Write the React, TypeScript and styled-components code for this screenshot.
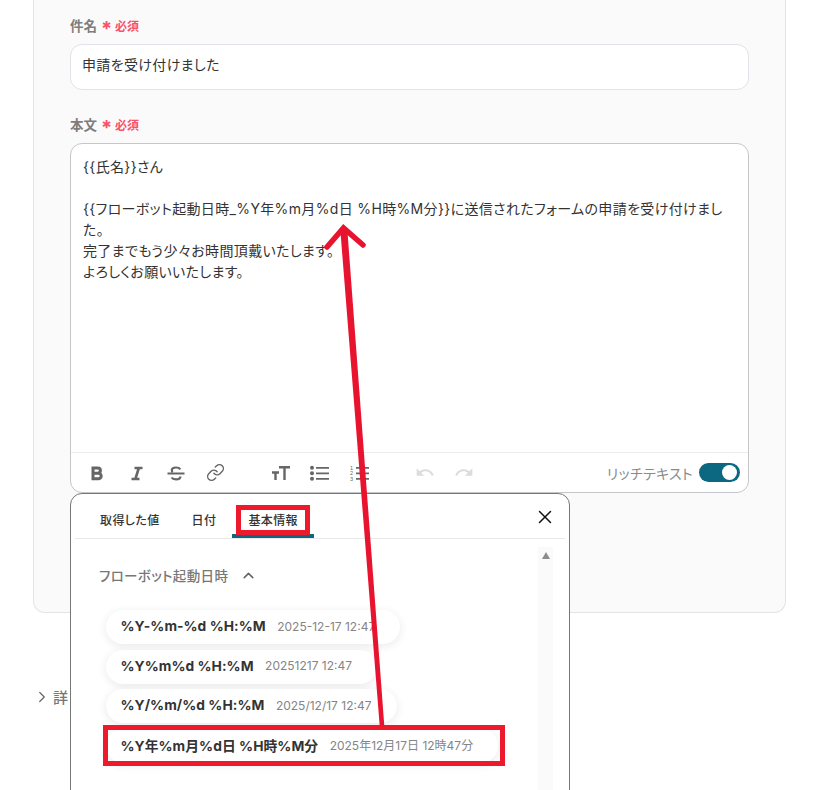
import { FC, ReactNode } from 'react'
import { ChevronRight, ChevronUp, Link, X } from 'lucide-react'
import { MdRedo, MdUndo } from 'react-icons/md'
import styled, { createGlobalStyle } from 'styled-components'

const GlobalStyle = createGlobalStyle`
  html, body {
    margin: 0;
    padding: 0;
    background: #fff;
  }
  body {
    font-family: Inter, "Noto Sans CJK JP", "Noto Sans", sans-serif;
    font-feature-settings: "palt";
    color: #333;
  }
  * {
    box-sizing: border-box;
  }
`

const bodyLines = [
  '{{氏名}}さん',
  '',
  '{{フローボット起動日時_%Y年%m月%d日 %H時%M分}}に送信されたフォームの申請を受け付けました。',
  '完了までもう少々お時間頂戴いたします。',
  'よろしくお願いいたします。',
]

const chips = [
  { format: '%Y-%m-%d %H:%M', sample: '2025-12-17 12:47' },
  { format: '%Y%m%d %H:%M', sample: '20251217 12:47' },
  { format: '%Y/%m/%d %H:%M', sample: '2025/12/17 12:47' },
  { format: '%Y年%m月%d日 %H時%M分', sample: '2025年12月17日 12時47分' },
]

const FieldLabel: FC<{ children: ReactNode }> = ({ children }) => (
  <Label>
    {children}
    <Asterisk>*</Asterisk>
    <Required>必須</Required>
  </Label>
)

const Toolbar = () => (
  <ToolbarRow>
    <IconGroup>
      <IconButton>
        <svg width="20" height="20" viewBox="0 0 20 20" fill="none" stroke="#666" strokeWidth="3">
          <path d="M6 5h4.800a2.600 2.600 0 0 1 0 5.200H6M6 10.200h5.400a2.800 2.800 0 0 1 0 5.600H6M6 3.500v13.800" />
        </svg>
      </IconButton>
      <IconButton>
        <svg width="20" height="20" viewBox="0 0 20 20" fill="none" stroke="#666" strokeWidth="2.600">
          <path d="M7.500 5h8M4.500 16h8M11.800 5l-3.400 11" />
        </svg>
      </IconButton>
      <IconButton>
        <svg width="20" height="20" viewBox="0 0 20 20" fill="none" stroke="#666" strokeWidth="2.200">
          <path d="M1.500 10.500h17M14.300 6.400c-.8-1.300-2.200-1.900-4.300-1.900-2.600 0-4.200 1.100-4.200 2.700 0 .8.300 1.400.9 1.900M5.600 14.500c.8 1.300 2.300 1.900 4.400 1.900 2.600 0 4.400-1.100 4.400-2.900" />
        </svg>
      </IconButton>
      <IconButton>
        <Link size={19} color="#666" strokeWidth={1.8} />
      </IconButton>
    </IconGroup>
    <IconGroup>
      <IconButton>
        <svg width="20" height="20" viewBox="0 0 20 20" fill="none" stroke="#666" strokeWidth="2.400">
          <path d="M8 4.200h11M13.500 4.200v12.800M1 9.500h7M4.500 9.500v7.500" />
        </svg>
      </IconButton>
      <IconButton>
        <svg width="20" height="20" viewBox="0 0 20 20" fill="none" stroke="#666" strokeWidth="1.800">
          <path d="M6 4.800h13M6 10.300h13M6 15.800h13" />
          <g fill="#666" stroke="none">
            <circle cx="2" cy="4.800" r="2" />
            <circle cx="2" cy="10.300" r="2" />
            <circle cx="2" cy="15.800" r="2" />
          </g>
        </svg>
      </IconButton>
      <IconButton>
        <svg width="20" height="20" viewBox="0 0 20 20" fill="none" stroke="#666" strokeWidth="1.800">
          <path d="M6 4.800h13M6 10.300h13M6 15.800h13" />
          <g fill="#666" stroke="none" fontSize="5.500" fontFamily="Liberation Sans, sans-serif">
            <text x="0" y="6.800">1</text>
            <text x="0" y="12.300">2</text>
            <text x="0" y="17.800">3</text>
          </g>
        </svg>
      </IconButton>
    </IconGroup>
    <IconGroup>
      <IconButton>
        <MdUndo size={25} color="#dcdcdc" />
      </IconButton>
      <IconButton>
        <MdRedo size={25} color="#dcdcdc" />
      </IconButton>
    </IconGroup>
    <RichText>
      <RichLabel>リッチテキスト</RichLabel>
      <ToggleTrack>
        <ToggleKnob />
      </ToggleTrack>
    </RichText>
  </ToolbarRow>
)

const VariablePopup = () => (
  <Popup>
    <TabRow>
      <Tab>取得した値</Tab>
      <Tab>日付</Tab>
      <Tab $active>基本情報</Tab>
      <CloseButton>
        <X size={22} color="#111" strokeWidth={1.6} />
      </CloseButton>
    </TabRow>
    <PopupBody>
      <PopupContent>
        <SectionTitle>
          フローボット起動日時
          <ChevronUp size={17} color="#666" strokeWidth={2.200} />
        </SectionTitle>
        <ChipList>
          {chips.map((chip) => (
            <Chip key={chip.format}>
              <ChipFormat>{chip.format}</ChipFormat>
              <ChipSample>{chip.sample}</ChipSample>
            </Chip>
          ))}
        </ChipList>
      </PopupContent>
      <ScrollTrack>
        <ScrollArrow />
      </ScrollTrack>
    </PopupBody>
  </Popup>
)

// 赤い注釈（枠と矢印）はスクリーンショットの上に重ねる
const Annotations = () => (
  <AnnotationLayer width="832" height="790" viewBox="0 0 832 790" fill="none" stroke="#ed1a2e" strokeWidth="5">
    <rect x="238.500" y="507.500" width="69" height="25" />
    <rect x="105.500" y="727.500" width="397" height="36" />
    <polygon points="340.500,232 347.500,232 384.300,726 379.700,726" fill="#e8142f" stroke="none" />
    <path d="M327 247L343.500 228L363 245" stroke="#e8142f" strokeWidth="5.500" strokeLinecap="round" />
  </AnnotationLayer>
)

export default function App() {
  return (
    <Page>
      <GlobalStyle />
      <Card>
        <FieldLabel>件名</FieldLabel>
        <SubjectInput>申請を受け付けました</SubjectInput>
        <BodyLabelWrap>
          <FieldLabel>本文</FieldLabel>
        </BodyLabelWrap>
        <Editor>
          <EditorText>
            {bodyLines.map((line, i) => (
              <EditorLine key={i}>{line || '\u00a0'}</EditorLine>
            ))}
          </EditorText>
          <Toolbar />
        </Editor>
      </Card>
      <DetailRow>
        <ChevronRight size={18} color="#666" strokeWidth={1.6} />詳
      </DetailRow>
      <VariablePopup />
      <Annotations />
    </Page>
  )
}

const Page = styled.div`
  position: relative;
  width: 832px;
  height: 790px;
  overflow: hidden;
  padding: 0 46px 0 33px;
`

const Card = styled.section`
  height: 613px;
  padding: 16px 36px 0 36px;
  background: #fafafa;
  border: 1px solid #e4e4e4;
  border-top: 0;
  border-radius: 0 0 12px 12px;
`

const Label = styled.div`
  display: flex;
  align-items: center;
  height: 18px;
  font-size: 13.500px;
  font-weight: 700;
  color: #7d7d7d;
`

const Asterisk = styled.span`
  margin-left: 4px;
  width: 10px;
  font-size: 20px;
  line-height: 18px;
  padding-top: 8px;
  color: #f8516a;
`

const Required = styled.span`
  margin-left: 4px;
  font-size: 12px;
  color: #f8516a;
`

const SubjectInput = styled.div`
  display: flex;
  align-items: center;
  height: 46px;
  margin-top: 10px;
  padding: 0 11px 7px;
  font-size: 14px;
  letter-spacing: 0.35px;
  background: #fff;
  border: 1px solid #e2e2e8;
  border-radius: 12px;
`

const BodyLabelWrap = styled.div`
  margin-top: 25px;
  margin-bottom: 10px;
`

const Editor = styled.div`
  height: 350px;
  display: flex;
  flex-direction: column;
  background: #fff;
  border: 1px solid #c6c6c6;
  border-radius: 12px;
`

const EditorText = styled.div`
  flex: 1;
  padding: 12px 12px 0;
  font-size: 14px;
  line-height: 21px;
  letter-spacing: 0.35px;
  color: #333;
`

const EditorLine = styled.div``

const ToolbarRow = styled.div`
  display: flex;
  align-items: center;
  gap: 45px;
  height: 40px;
  padding: 0 8px 0 16px;
  border-top: 1px solid #ececec;
`

const IconGroup = styled.div`
  display: flex;
  align-items: center;
  gap: 19.500px;
`

const IconButton = styled.span`
  display: flex;
  align-items: center;
  justify-content: center;
  width: 20px;
  height: 20px;
  flex: none;
`

const RichText = styled.div`
  display: flex;
  align-items: center;
  gap: 6px;
  margin-left: auto;
`

const RichLabel = styled.span`
  font-size: 14px;
  letter-spacing: 0.3px;
  color: #8a8a8a;
`

const ToggleTrack = styled.span`
  display: flex;
  align-items: center;
  justify-content: flex-end;
  width: 41px;
  height: 19px;
  padding-right: 3px;
  background: #0c6780;
  border-radius: 10px;
`

const ToggleKnob = styled.span`
  width: 15px;
  height: 15px;
  background: #fff;
  border-radius: 50%;
`

const Popup = styled.div`
  position: absolute;
  left: 70px;
  top: 493px;
  width: 500px;
  height: 330px;
  background: #fff;
  border: 1px solid #777;
  border-radius: 12px 12px 0 0;
`

const TabRow = styled.div`
  display: flex;
  align-items: stretch;
  height: 45px;
  margin: 0 4px;
  padding-left: 9px;
  border-bottom: 1px solid #e8e8e8;
`

const Tab = styled.div<{ $active?: boolean }>`
  display: flex;
  align-items: center;
  padding: 10px 16px 0;
  font-size: 12px;
  font-weight: 500;
  letter-spacing: 0.4px;
  color: #333;
  border-bottom: 4px solid ${(p) => (p.$active ? '#0c6780' : 'transparent')};
  border-radius: 4px 4px 0 0;
`

const CloseButton = styled.span`
  display: flex;
  align-items: center;
  margin-left: auto;
  padding: 6px 9px 0 0;
  margin-bottom: 4px;
`

const PopupBody = styled.div`
  display: flex;
  padding: 8px 16px 0 28px;
`

const PopupContent = styled.div`
  flex: 1;
`

const SectionTitle = styled.div`
  display: flex;
  align-items: center;
  gap: 12px;
  height: 20px;
  margin-top: 18px;
  font-size: 13.500px;
  font-weight: 500;
  letter-spacing: 0.35px;
  color: #777;
`

const ChipList = styled.div`
  display: flex;
  flex-direction: column;
  align-items: flex-start;
  gap: 5.500px;
  margin: 25px 0 0 7px;
`

const Chip = styled.div`
  display: inline-flex;
  align-items: center;
  gap: 11.500px;
  height: 34px;
  padding: 0 25px 2px 14.500px;
  background: #fff;
  border-radius: 17px;
  box-shadow: 0 2px 10px rgba(0, 0, 0, 0.09);
`

const ChipFormat = styled.span`
  font-size: 13.800px;
  font-weight: 700;
  letter-spacing: 0.05px;
  color: #333;
`

const ChipSample = styled.span`
  font-size: 12px;
  color: #858585;
`

const ScrollTrack = styled.div`
  display: flex;
  justify-content: center;
  width: 15px;
  height: 280px;
  padding-top: 5px;
  background: #fafafa;
`

const ScrollArrow = styled.span`
  width: 0;
  height: 0;
  border-left: 4.500px solid transparent;
  border-right: 4.500px solid transparent;
  border-bottom: 7px solid #8c8c8c;
`

const DetailRow = styled.div`
  display: flex;
  align-items: center;
  gap: 2px;
  margin: 73px 0 0 0;
  font-size: 15px;
  font-weight: 500;
  color: #777;
`

const AnnotationLayer = styled.svg`
  position: absolute;
  left: 0;
  top: 0;
  pointer-events: none;
`
